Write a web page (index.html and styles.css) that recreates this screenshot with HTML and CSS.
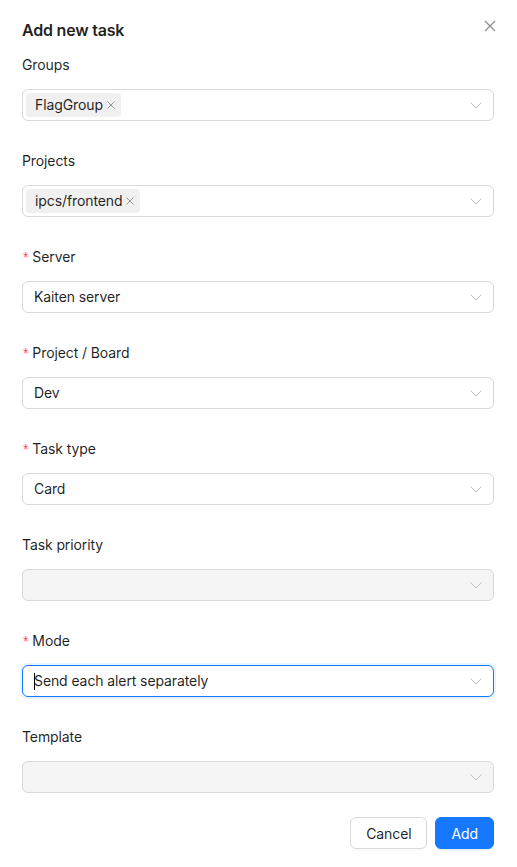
FILE: index.html
```html
<!DOCTYPE html>
<html lang="en">
<head>
    <meta charset="UTF-8">
    <meta name="viewport" content="width=device-width, initial-scale=1.0">
    <title>Add new task</title>
    <link rel="stylesheet" href="styles.css">
</head>
<body>

<div class="modal">
    <div class="modal-header">
        <h2 class="modal-title">Add new task</h2>
        <span class="modal-close">
            <svg width="12" height="12" viewBox="0 0 12 12"><path d="M1 1L11 11M11 1L1 11" stroke="currentColor" stroke-width="1.2" fill="none"/></svg>
        </span>
    </div>

    <form class="form">
        <div class="form-item">
            <label class="form-label">Groups</label>
            <div class="select">
                <span class="tag">FlagGroup <span class="tag-close"><svg width="8" height="8" viewBox="0 0 8 8"><path d="M0.5 0.5L7.5 7.5M7.5 0.5L0.5 7.5" stroke="currentColor" fill="none"/></svg></span></span>
                <span class="arrow"><svg width="12" height="7" viewBox="0 0 12 7"><path d="M0.5 0.5L6 6L11.5 0.5" stroke="currentColor" fill="none"/></svg></span>
            </div>
        </div>

        <div class="form-item">
            <label class="form-label">Projects</label>
            <div class="select">
                <span class="tag">ipcs/frontend <span class="tag-close"><svg width="8" height="8" viewBox="0 0 8 8"><path d="M0.5 0.5L7.5 7.5M7.5 0.5L0.5 7.5" stroke="currentColor" fill="none"/></svg></span></span>
                <span class="arrow"><svg width="12" height="7" viewBox="0 0 12 7"><path d="M0.5 0.5L6 6L11.5 0.5" stroke="currentColor" fill="none"/></svg></span>
            </div>
        </div>

        <div class="form-item">
            <label class="form-label required">Server</label>
            <div class="select">
                <span class="value">Kaiten server</span>
                <span class="arrow"><svg width="12" height="7" viewBox="0 0 12 7"><path d="M0.5 0.5L6 6L11.5 0.5" stroke="currentColor" fill="none"/></svg></span>
            </div>
        </div>

        <div class="form-item">
            <label class="form-label required">Project / Board</label>
            <div class="select">
                <span class="value">Dev</span>
                <span class="arrow"><svg width="12" height="7" viewBox="0 0 12 7"><path d="M0.5 0.5L6 6L11.5 0.5" stroke="currentColor" fill="none"/></svg></span>
            </div>
        </div>

        <div class="form-item">
            <label class="form-label required">Task type</label>
            <div class="select">
                <span class="value">Card</span>
                <span class="arrow"><svg width="12" height="7" viewBox="0 0 12 7"><path d="M0.5 0.5L6 6L11.5 0.5" stroke="currentColor" fill="none"/></svg></span>
            </div>
        </div>

        <div class="form-item">
            <label class="form-label">Task priority</label>
            <div class="select disabled">
                <span class="value"></span>
                <span class="arrow"><svg width="12" height="7" viewBox="0 0 12 7"><path d="M0.5 0.5L6 6L11.5 0.5" stroke="currentColor" fill="none"/></svg></span>
            </div>
        </div>

        <div class="form-item">
            <label class="form-label required">Mode</label>
            <div class="select focused">
                <span class="value"><span class="caret"></span>Send each alert separately</span>
                <span class="arrow"><svg width="12" height="7" viewBox="0 0 12 7"><path d="M0.5 0.5L6 6L11.5 0.5" stroke="currentColor" fill="none"/></svg></span>
            </div>
        </div>

        <div class="form-item">
            <label class="form-label">Template</label>
            <div class="select disabled">
                <span class="value"></span>
                <span class="arrow"><svg width="12" height="7" viewBox="0 0 12 7"><path d="M0.5 0.5L6 6L11.5 0.5" stroke="currentColor" fill="none"/></svg></span>
            </div>
        </div>
    </form>

    <div class="modal-footer">
        <button class="btn" type="button">Cancel</button>
        <button class="btn btn-primary" type="button">Add</button>
    </div>
</div>

</body>
</html>
```

FILE: styles.css
```css
body {
    margin: 0;
    background-color: #ffffff;
    font-family: 'Inter', 'Liberation Sans', sans-serif;
    font-size: 14px;
    letter-spacing: -0.1px;
    color: rgba(0, 0, 0, 0.88);
}

.modal {
    padding: 18px 23px 18px 22px;
}

.modal-header {
    display: flex;
    justify-content: space-between;
    align-items: center;
    height: 24px;
}

.modal-title {
    margin: 0;
    font-size: 16px;
    font-weight: 600;
    line-height: 24px;
    letter-spacing: -0.2px;
    color: rgba(0, 0, 0, 0.88);
}

.modal-close {
    display: flex;
    color: #8c8c8c;
    margin-right: -2px;
    margin-top: -9px;
}

.form {
    margin-top: 12px;
}

.form-item {
    margin-bottom: 29px;
}

.form-item:last-child {
    margin-bottom: 0;
}

.form-label {
    display: block;
    line-height: 22px;
    margin-bottom: 13px;
}

.form-label.required::before {
    content: "*";
    color: #ff4d4f;
    font-family: 'Liberation Sans', sans-serif;
    margin-left: 1px;
    margin-right: 4px;
}

.select {
    display: flex;
    align-items: center;
    height: 32px;
    box-sizing: border-box;
    border: 1px solid #d9d9d9;
    border-radius: 6px;
    padding: 0 11px 0 3px;
    background-color: #ffffff;
}

.select .value {
    flex: 1;
    padding-left: 8px;
    line-height: 22px;
    display: flex;
    align-items: center;
}

.select.disabled {
    background-color: #f5f5f5;
}

.select.focused {
    border-color: #1677ff;
    box-shadow: 0 0 0 2px rgba(5, 145, 255, 0.1);
}

.caret {
    display: inline-block;
    width: 1px;
    height: 17px;
    background-color: #000000;
    margin-right: -1px;
}

.tag {
    display: inline-flex;
    align-items: center;
    height: 24px;
    padding: 0 6px 0 9px;
    background-color: #f0f0f0;
    border-radius: 4px;
    line-height: 22px;
}

.tag-close {
    display: flex;
    color: #999999;
    margin-left: 4px;
}

.arrow {
    margin-left: auto;
    display: flex;
    color: #bfbfbf;
}

.modal-footer {
    display: flex;
    justify-content: flex-end;
    gap: 8px;
    margin-top: 24px;
}

.btn {
    height: 32px;
    padding: 0 15px;
    font-family: inherit;
    font-size: 14px;
    letter-spacing: -0.1px;
    border: 1px solid #d9d9d9;
    border-radius: 6px;
    background-color: #ffffff;
    color: rgba(0, 0, 0, 0.88);
    box-shadow: 0 2px 0 rgba(0, 0, 0, 0.02);
}

.btn-primary {
    background-color: #1677ff;
    border-color: #1677ff;
    color: #ffffff;
    box-shadow: 0 2px 0 rgba(5, 145, 255, 0.1);
}
```
